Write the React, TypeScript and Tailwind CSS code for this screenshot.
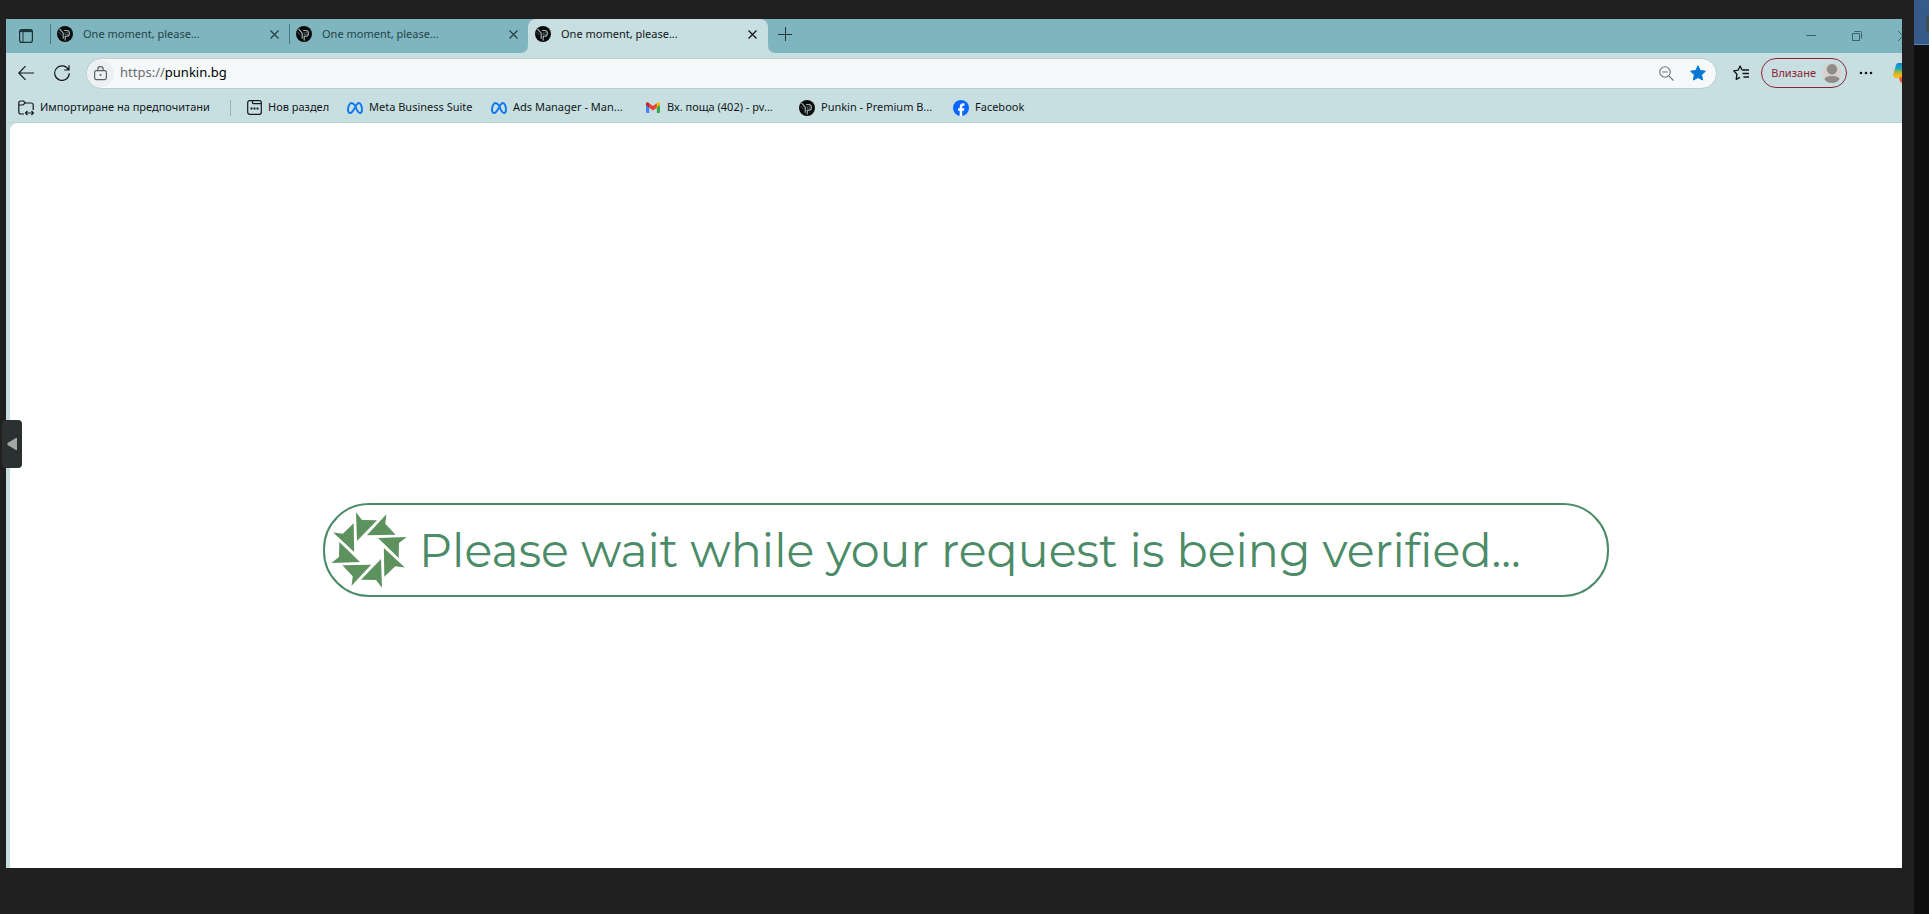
import React from 'react';

const tabs = [
  { id: 1, title: 'One moment, please...', active: false },
  { id: 2, title: 'One moment, please...', active: false },
  { id: 3, title: 'One moment, please...', active: true },
];

const bookmarks = [
  { label: 'Нов раздел', icon: NewSectionIcon, width: 'w-[100px]' },
  { label: 'Meta Business Suite', icon: MetaIcon, width: 'w-36' },
  { label: 'Ads Manager - Man...', icon: MetaIcon, width: 'w-[154px]' },
  { label: 'Вх. поща (402) - pv...', icon: GmailIcon, width: 'w-[154px]' },
  { label: 'Punkin - Premium B...', icon: PunkinIcon, width: 'w-[154px]' },
  { label: 'Facebook', icon: FacebookIcon, width: 'w-20' },
];

export default function App() {
  return (
    <div className="relative flex h-screen overflow-hidden bg-[#202020] font-['Noto_Sans','Open_Sans',sans-serif] text-[11px] text-[#101819]">
      <div className="flex min-w-0 flex-1 flex-col pt-[19px] pr-3 pb-[46px] pl-1.5">
        <div className="flex min-h-0 flex-1 flex-col overflow-hidden bg-[#c8dfe2]">
          <TabStrip />
          <Toolbar />
          <BookmarksBar />
          <div className="flex min-h-0 flex-1 pl-1">
            <VerifyPage />
          </div>
        </div>
      </div>

      <aside className="flex w-[15px] shrink-0 flex-col bg-[#0f0f0f]">
        <div className="flex h-[45px] justify-end overflow-hidden border-b border-[#5f84b5] bg-[#365a8a] pt-[15px]">
          <div className="h-[18px] w-[3px] rounded-l bg-[#3d5159]" />
        </div>
      </aside>

      <button
        aria-label="Show panel"
        className="absolute top-[420px] left-0.5 flex h-12 w-5 items-center justify-center rounded bg-[#2b3031]"
      >
        <svg viewBox="0 0 10 12" className="h-3 w-2.5" fill="#a5a7a7">
          <path d="M9 0h1v12H9L1 7.300Q-.5 6 1 4.700Z" />
        </svg>
      </button>
    </div>
  );
}

function TabStrip() {
  return (
    <header className="flex h-[34px] shrink-0 bg-[#7fb5be]">
      <button aria-label="Tab actions" className="flex w-11 shrink-0 items-center pl-[13px]">
        <svg viewBox="0 0 14 14" className="h-3.5 w-3.5" fill="none" stroke="#1d3438">
          <rect x=".6" y=".6" width="12.800" height="12.800" rx="2.200" strokeWidth="1.200" />
          <path d="M1 2h12" strokeWidth="2.200" />
          <path d="M4 3v10.500" strokeWidth="1" />
        </svg>
      </button>

      {tabs.map((tab) => (
        <div
          key={tab.id}
          className={
            tab.active
              ? 'relative flex w-60 items-center rounded-t-lg bg-[#c8dfe2] pr-[11px] pb-1 pl-[7px]'
              : 'flex w-[239px] items-center pr-2.5 pb-1 text-[#24444a]'
          }
        >
          {tab.active ? (
            <>
              <TabFoot className="absolute bottom-0 -left-2 h-2 w-2" />
              <TabFoot className="absolute -right-2 bottom-0 h-2 w-2 -scale-x-100" />
            </>
          ) : (
            <div className="mr-1.5 h-5 w-px bg-[#47777f]" />
          )}
          <PunkinIcon />
          <span className="ml-2.5 flex-1 whitespace-nowrap">{tab.title}</span>
          <button aria-label="Close tab">
            <svg viewBox="0 0 9 9" className="h-[9px] w-[9px]" fill="none" stroke="currentColor" strokeWidth="1.300">
              <path d="M.5.5l8 8M8.500.5l-8 8" />
            </svg>
          </button>
        </div>
      ))}

      <button aria-label="New tab" className="ml-2.5 flex w-5 items-center pb-1">
        <svg viewBox="0 0 14 14" className="h-3.5 w-3.5" fill="none" stroke="#1d3438">
          <path d="M7.500 0v14M0 7.500h14" />
        </svg>
      </button>

      <div className="ml-auto flex shrink-0 items-center text-[#38646c]">
        <button aria-label="Minimize" className="mr-9">
          <svg viewBox="0 0 10 10" className="h-2.5 w-2.5" fill="none" stroke="currentColor">
            <path d="M0 4.500h10" />
          </svg>
        </button>
        <button aria-label="Restore" className="mr-9">
          <svg viewBox="0 0 10 10" className="h-2.5 w-2.5" fill="none" stroke="currentColor">
            <path d="M.5 2.500h7v7h-7zM2.500.5h6q1 0 1 1v6" />
          </svg>
        </button>
        <button aria-label="Close window" className="w-1 overflow-hidden">
          <svg viewBox="0 0 10 10" className="h-2.5 w-2.5 max-w-none" fill="none" stroke="currentColor">
            <path d="M0 0l10 10M10 0L0 10" />
          </svg>
        </button>
      </div>
    </header>
  );
}

function Toolbar() {
  return (
    <div className="flex h-10 shrink-0 items-center pl-3">
      <button aria-label="Back" className="mr-5">
        <svg viewBox="0 0 16 16" className="h-4 w-4" fill="none" stroke="#151b1c" strokeWidth="1.200">
          <path d="M16 8H.8M7.500 1.200L.8 8l6.700 6.800" />
        </svg>
      </button>
      <button aria-label="Refresh" className="mr-4">
        <svg viewBox="0 0 16 16" className="h-4 w-4" fill="none" stroke="#151b1c" strokeWidth="1.200">
          <path d="M14.600 5A7.300 7.300 0 1 0 15.300 8.300M15 .3V5h-4.800" />
        </svg>
      </button>

      <div className="flex h-[31px] min-w-0 flex-1 items-center rounded-full border border-[#b9cfd2] bg-[#f5f9fa] pr-2.5">
        <button aria-label="Site information" className="flex h-[27px] w-[27px] items-center justify-center rounded-full bg-[#edf0f0]">
          <svg viewBox="0 0 13 15" className="h-[15px] w-[13px]" fill="none" stroke="#5b6061" strokeWidth="1.200">
            <rect x=".6" y="4.600" width="11.800" height="9" rx="1.800" />
            <path d="M3.800 4.600V3.300a2.700 2.700 0 0 1 5.400 0v1.300" />
            <circle cx="6.500" cy="9" r="1" fill="#5b6061" stroke="none" />
          </svg>
        </button>
        <label htmlFor="address" className="ml-1.5 text-[13px] text-[#686d6e]">
          https://
        </label>
        <input
          id="address"
          defaultValue="punkin.bg"
          className="min-w-0 flex-1 bg-transparent text-[13px] text-black outline-none"
        />
        <button aria-label="Zoom out" className="mr-4">
          <svg viewBox="0 0 15 15" className="h-[15px] w-[15px]" fill="none" stroke="#6d7172" strokeWidth="1.100">
            <circle cx="6" cy="6" r="5.200" />
            <path d="M3.300 6h5.400M9.800 9.800l4.700 4.700" />
          </svg>
        </button>
        <button aria-label="Edit favorite">
          <svg viewBox="0 0 16 16" className="h-4 w-4" fill="#0078d4" stroke="#0078d4" strokeWidth="1" strokeLinejoin="round">
            <path d="M8 .8l2.200 4.700 5.200.7-3.800 3.600 1 5.200L8 12.500 3.400 15l1-5.200L.6 6.200l5.200-.7z" />
          </svg>
        </button>
      </div>

      <button aria-label="Favorites" className="ml-4">
        <svg viewBox="0 0 16 16" className="h-4 w-4" fill="none" stroke="#101516" strokeWidth="1.300" strokeLinejoin="round">
          <path d="M10.200 5.200L9 4.800 7.100 1 5.200 5.200.7 5.800 4 9.200l-.8 5.100L7 12.300M10 5h6M9.500 8.500H16M10.500 12H16" />
        </svg>
      </button>
      <button className="ml-3 flex h-[30px] shrink-0 items-center gap-1.5 rounded-full border border-[#8c2433] pr-1 pl-[9px] text-[#8c2433]">
        Влизане
        <svg viewBox="0 0 20 20" className="h-5 w-5">
          <circle cx="10" cy="10" r="10" fill="#d5d2d0" />
          <circle cx="10" cy="6.300" r="5.200" fill="#8f8c8a" />
          <path d="M2.500 16.500q0-3.500 7.500-3.500t7.500 3.500q-3 3.500-7.500 3.500t-7.500-3.500" fill="#8f8c8a" />
        </svg>
      </button>
      <button aria-label="Settings and more" className="ml-3">
        <svg viewBox="0 0 14 4" className="h-1 w-3.5" fill="#101516">
          <circle cx="2" cy="2" r="1.300" />
          <circle cx="7" cy="2" r="1.300" />
          <circle cx="12" cy="2" r="1.300" />
        </svg>
      </button>
      <button aria-label="Copilot" className="ml-5 w-[9px] shrink-0 overflow-hidden">
        <svg viewBox="0 0 20 20" className="h-5 w-5 max-w-none">
          <defs>
            <linearGradient id="copilot" x1="0" y1="0" x2="0" y2="1">
              <stop offset="0" stopColor="#1583d8" />
              <stop offset=".35" stopColor="#1ba6c6" />
              <stop offset=".6" stopColor="#9dbb35" />
              <stop offset=".8" stopColor="#f6b61c" />
            </linearGradient>
          </defs>
          <path d="M5 0h9l3 15H2q-2-1-2-3L3 2q.6-1.500 2-2Z" fill="url(#copilot)" />
          <path d="M6 15l3-1h5v6H9q-2 0-3-5Z" fill="#f0583c" />
        </svg>
      </button>
    </div>
  );
}

function BookmarksBar() {
  return (
    <nav className="flex h-[30px] shrink-0 items-center border-b border-[#bcd2d5] pl-3 whitespace-nowrap">
      <a href="#import" className="flex w-[212px] items-center gap-1.5">
        <svg viewBox="0 0 16 16" className="h-4 w-4 shrink-0" fill="none" stroke="#151b1c" strokeWidth="1.200">
          <path d="M6 14H3Q.8 14 .8 12V3Q.8 1 3 1h2.500l2 2H13q2.200 0 2.200 2v5M.8 5h4l2.500-2M7.500 13H15M9.500 11l-2 2 2 2M13.500 11l2 2-2 2" />
        </svg>
        Импортиране на предпочитани
      </a>
      <div className="mr-4 h-4 w-px bg-[#9db3b6]" />
      {bookmarks.map(({ label, icon: Icon, width }) => (
        <a key={label} href="#bookmark" className={`flex items-center gap-1.5 ${width}`}>
          <Icon />
          {label}
        </a>
      ))}
    </nav>
  );
}

function VerifyPage() {
  return (
    <main className="flex min-w-0 flex-1 items-center justify-center rounded-tl-lg bg-white pt-[109px] pl-5">
      <div
        role="status"
        className="flex h-[94px] w-[1286px] items-center rounded-[46px] border-2 border-[#4b8b67] pl-1.5 font-['Montserrat','DejaVu_Sans',sans-serif] text-[46px] whitespace-nowrap text-[#4b8b67]"
      >
        <Spinner />
        <span className="ml-3">Please wait while your request is being verified...</span>
      </div>
    </main>
  );
}

function Spinner() {
  return (
    <svg viewBox="-114 -114 228 228" className="h-[76px] w-[76px] shrink-0" fill="#5d915e">
      {[0, 45, 90, 135, 180, 225, 270, 315].map((angle) => (
        <path key={angle} d="M-39-113L-21-90 24-89-36-27Z" transform={`rotate(${angle})`} />
      ))}
    </svg>
  );
}

function TabFoot({ className }: { className: string }) {
  return (
    <svg viewBox="0 0 8 8" className={className} fill="#c8dfe2">
      <path d="M8 0v8H0q8 0 8-8Z" />
    </svg>
  );
}

function PunkinIcon() {
  return (
    <svg viewBox="0 0 16 16" className="h-4 w-4 shrink-0" fill="none">
      <circle cx="8" cy="8" r="8" fill="#080b0c" />
      <path d="M2.500 2.800l3.700 4.400v5.600M7.200 4.500h2.300a2.900 2.900 0 0 1 0 5.800H8.200v4.200" stroke="#a9b9bb" strokeWidth="1.100" />
      <path d="M8.200 6.200v2.600h1.200a1.200 1.200 0 0 0 0-2.500M1.500 6l3 3" stroke="#65777a" strokeWidth=".8" />
    </svg>
  );
}

function NewSectionIcon() {
  return (
    <svg viewBox="0 0 15 15" className="h-[15px] w-[15px] shrink-0" fill="none" stroke="#151b1c" strokeWidth="1.200">
      <rect x=".7" y=".7" width="13.600" height="13.600" rx="2" />
      <path d="M5.500.7v2q0 1 1 1h7.800" />
      <path d="M3.500 8.500h2M6.500 8.500h2M9.500 8.500h2" strokeWidth="2" />
    </svg>
  );
}

function MetaIcon() {
  return (
    <svg viewBox="0 0 16 12" className="h-3 w-4 shrink-0" fill="none" strokeWidth="1.900">
      <path
        d="M8 3.500C6.500 1.500 5.500 1 4.500 1 2.500 1 1 4.500 1 7.800 1 9.800 1.800 11 3.200 11 5 11 6 9.200 8 5.500 9.500 2.500 10.500 1 12 1c1.800 0 3 3.500 3 6.800 0 2-.8 3.200-2 3.200C11 11 10 8.500 8 3.500Z"
        stroke="#0b78ee"
      />
    </svg>
  );
}

function GmailIcon() {
  return (
    <svg viewBox="0 0 14 11" className="mx-px h-[11px] w-3.5 shrink-0">
      <path d="M0 2l3.200 2.300V11H1q-1 0-1-1Z" fill="#4285f4" />
      <path d="M14 2l-3.200 2.300V11H13q1 0 1-1Z" fill="#34a853" />
      <path d="M10.800 1.200Q14-1 14 1.800v1.300l-3.200 2.600Z" fill="#fbbc04" />
      <path d="M3.200 1.200L7 4l3.800-2.800v4.500L7 8.500 3.200 5.700Z" fill="#ea4335" />
      <path d="M3.200 1.200Q0-1 0 1.800v1.300l3.200 2.600Z" fill="#c5221f" />
    </svg>
  );
}

function FacebookIcon() {
  return (
    <svg viewBox="0 0 16 16" className="h-4 w-4 shrink-0">
      <circle cx="8" cy="8" r="8" fill="#0866ff" />
      <path d="M6.700 16v-5.300H5V8.200h1.700v-1C6.700 4.500 8 3.300 10.200 3.300l1.300.1v2.300h-.9c-1 0-1.400.5-1.400 1.500v1h2.200L11 10.700H9.200V16Z" fill="#fff" />
    </svg>
  );
}
